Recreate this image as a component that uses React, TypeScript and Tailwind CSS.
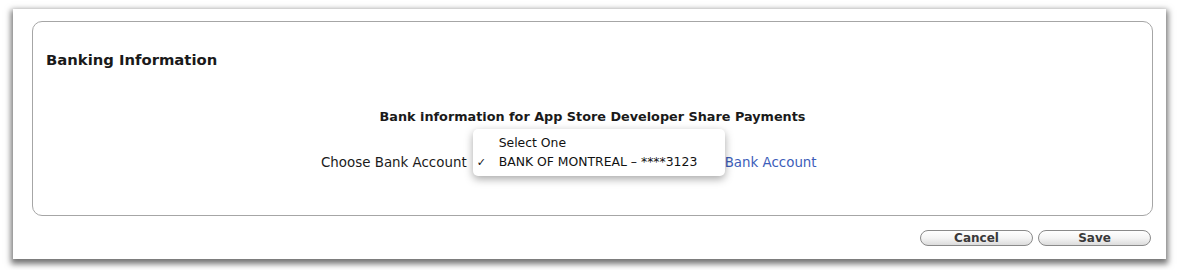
const font = { fontFamily: '"DejaVu Sans", "Lucida Grande", sans-serif' }

function PillButton({ label }: { label: string }) {
  return (
    <button className="w-[113px] h-[16px] rounded-full border border-[#8a8a8a] bg-gradient-to-b from-white via-[#f4f4f4] to-[#dcdcdc] text-[12px] leading-none font-bold text-[#3a3a3a] flex items-center justify-center">
      {label}
    </button>
  )
}

export default function App() {
  return (
    <div className="w-[1182px] h-[270px] bg-white pt-[9px] pl-[13px]" style={font}>
      {/* Page panel */}
      <div className="w-[1153px] h-[250px] bg-white shadow-[0_3px_6px_2px_rgba(0,0,0,0.55)] pt-[12px] pl-[19px] flex flex-col">
        {/* Section box */}
        <div className="w-[1121px] h-[195px] rounded-[10px] border border-[#a6a6a6] flex flex-col">
          <h2 className="pl-[13px] pt-[31px] text-[14.8px] font-bold text-[#1a1a1a] leading-none">
            Banking Information
          </h2>

          <p className="mt-[43px] text-center text-[12.8px] font-bold text-[#1a1a1a] leading-none">
            Bank information for App Store Developer Share Payments
          </p>

          <div className="mt-[32px] h-[14px] flex items-center text-[13.4px] leading-none text-[#1a1a1a] pl-[288px]">
            <span>Choose Bank Account</span>
            <div className="relative ml-[6px] w-[252px] h-[14px]">
              {/* Popup menu */}
              <div className="absolute left-0 top-[-27px] w-[252px] h-[47px] bg-white rounded-[5px] shadow-[0_3px_8px_rgba(0,0,0,0.35)] pt-[5px] text-[12.4px] leading-none text-[#111]">
                <div className="pl-[26px] h-[19px] flex items-center">Select One</div>
                <div className="relative pl-[26px] h-[19px] flex items-center">
                  <span className="absolute left-[4px] text-[11px]">✓</span>
                  BANK OF MONTREAL – ****3123
                </div>
              </div>
            </div>
            <a className="text-[#3c5db9] text-[13.4px]">Bank Account</a>
          </div>
        </div>

        <div className="flex justify-end gap-[5px] pr-[15px] mt-[14px]">
          <PillButton label="Cancel" />
          <PillButton label="Save" />
        </div>
      </div>
    </div>
  )
}
